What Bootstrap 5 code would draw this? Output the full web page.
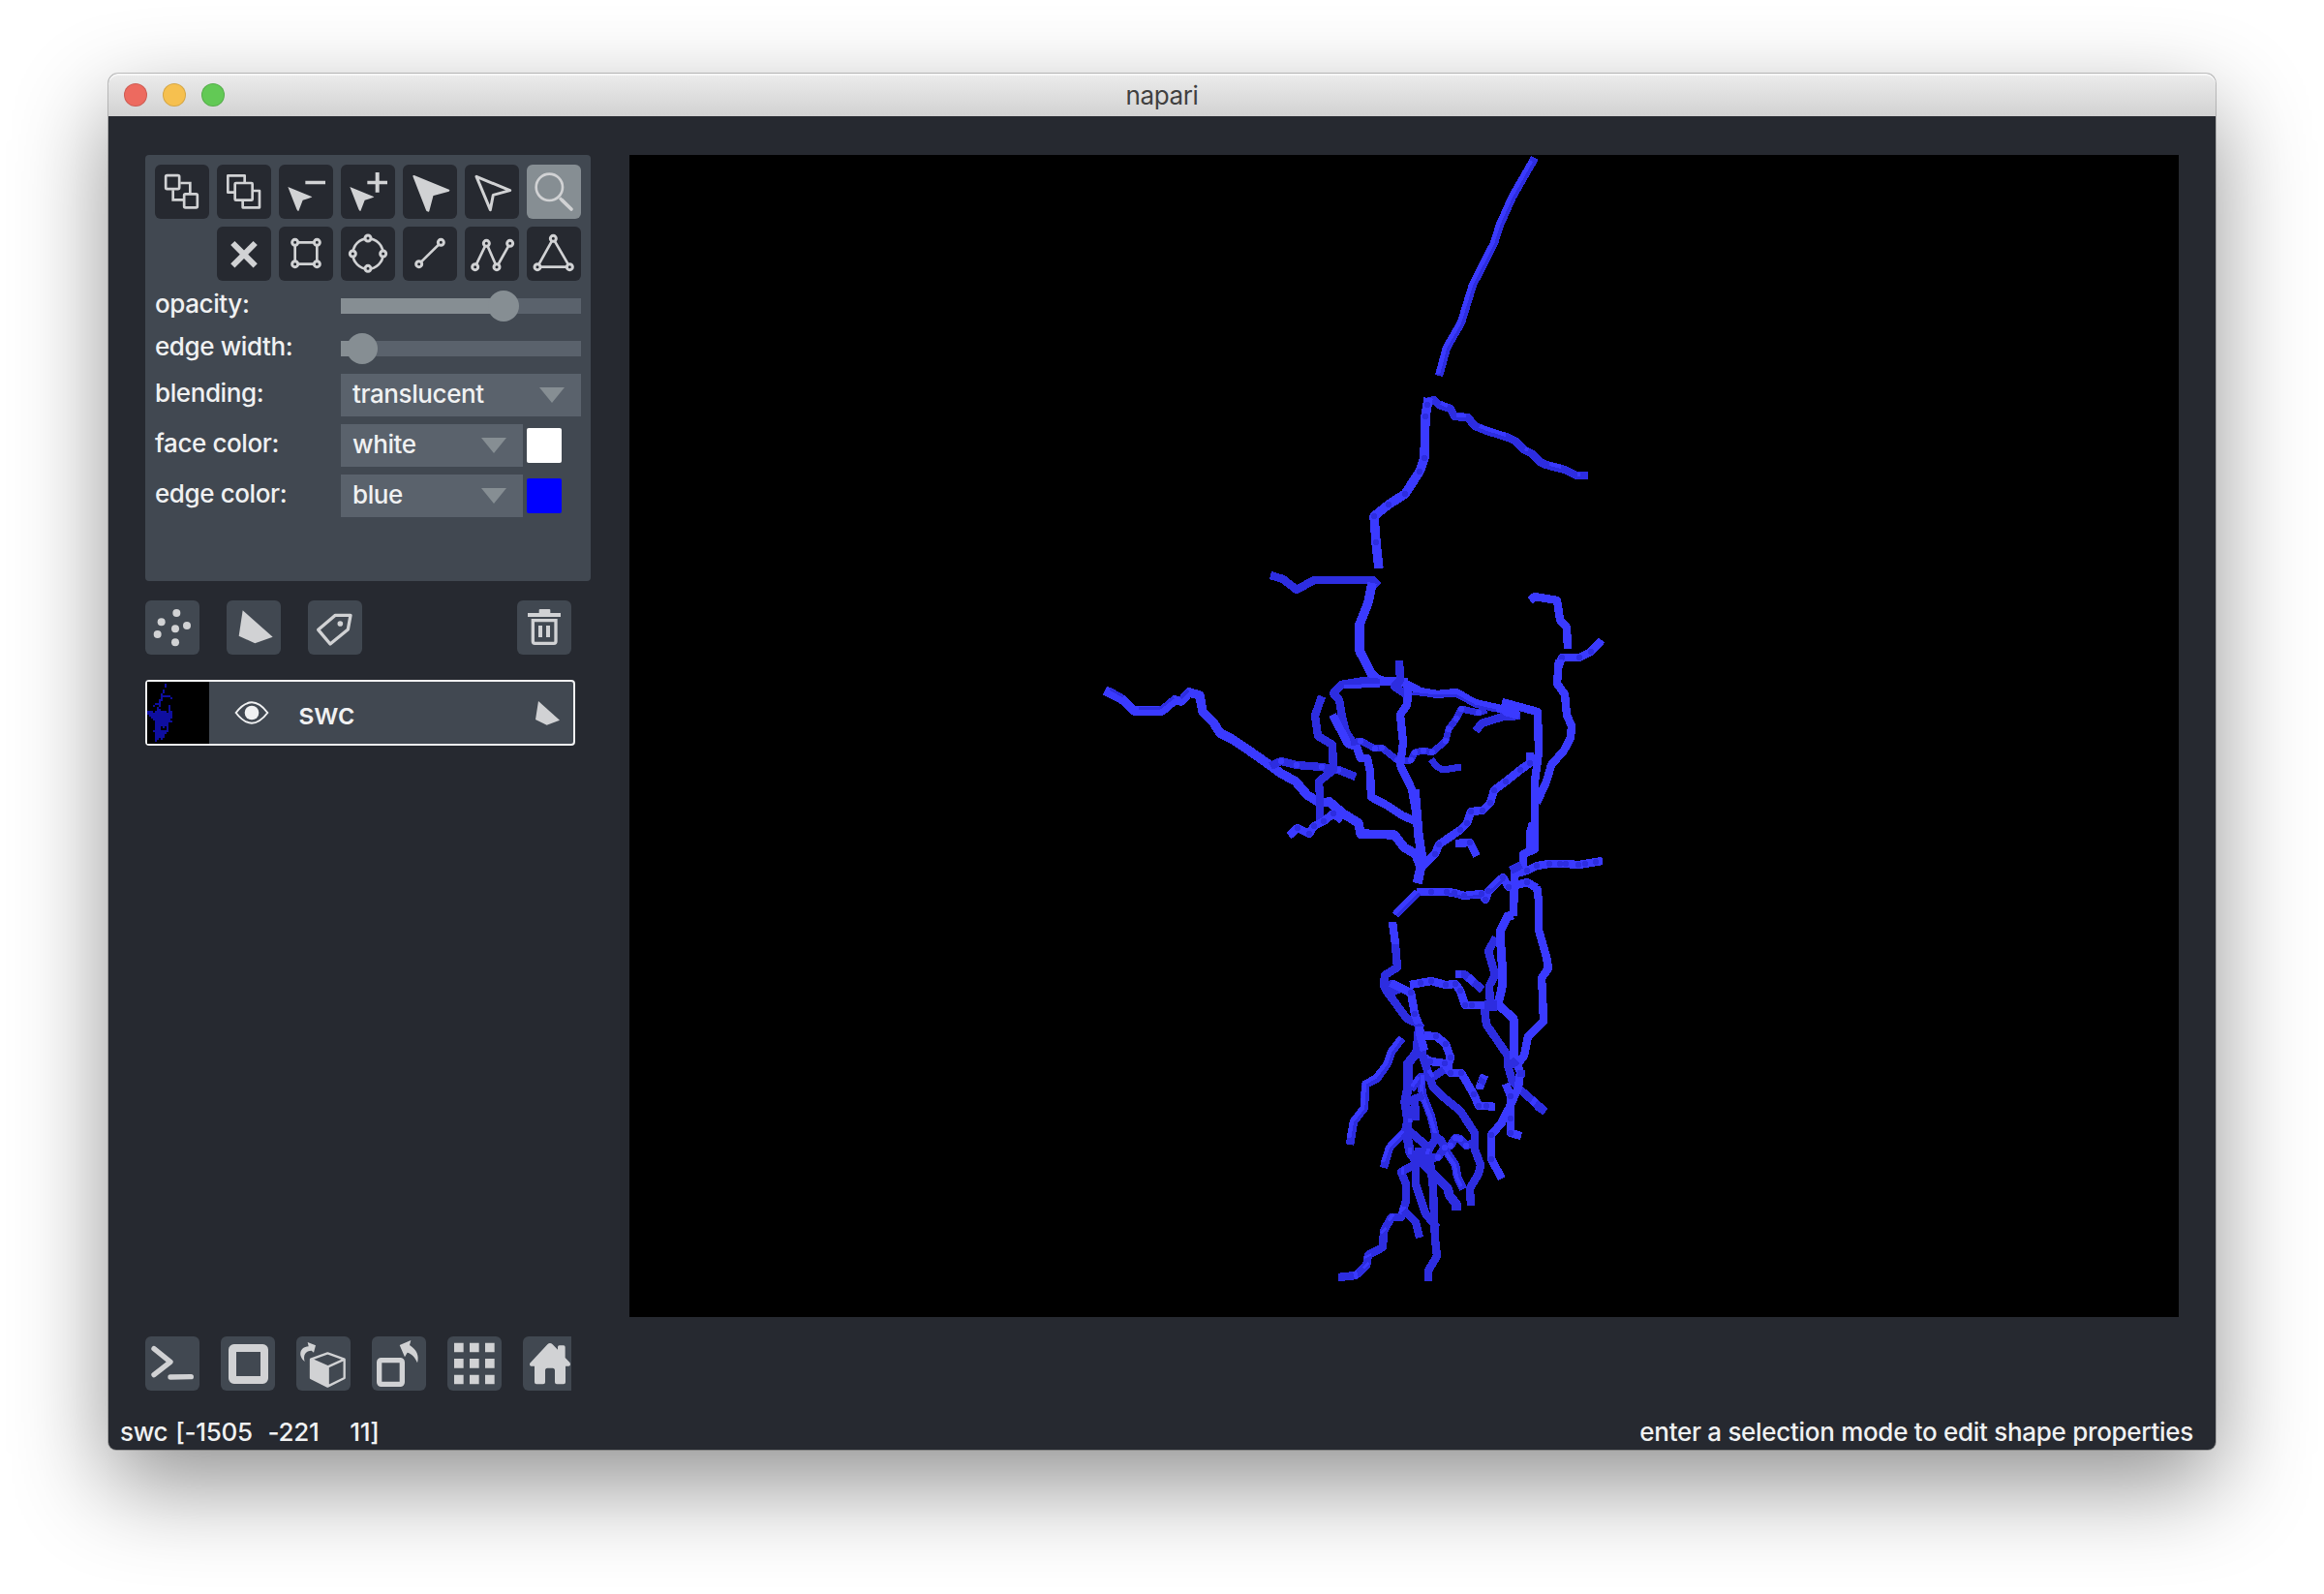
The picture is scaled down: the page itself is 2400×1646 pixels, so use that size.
<!DOCTYPE html>
<html lang="en">
<head>
<meta charset="utf-8">
<title>napari</title>
<link href="https://cdn.jsdelivr.net/npm/bootstrap@5.3.0/dist/css/bootstrap.min.css" rel="stylesheet">
<style>
body{background:#fff;font-family:Inter,"Liberation Sans",sans-serif;font-size:26px;font-weight:500;line-height:32px;color:#f0f1f2;height:1646px;overflow:hidden;padding-top:76px;letter-spacing:-.4px}
.win{width:2176px;height:1421px;background:#262930;border-radius:10px 10px 8px 8px;box-shadow:0 0 0 1px rgba(0,0,0,.22),0 36px 96px rgba(0,0,0,.43)}
.tbar{height:44px;background:linear-gradient(#ececec,#d2d2d2);border-radius:10px 10px 0 0;box-shadow:inset 0 2px 0 #f7f7f7;color:#404040;padding:0 16px}
.caption{font-weight:400;padding-top:2px}
.dot{width:24px;height:24px;border-radius:50%;border:1px solid #0002}
.lights{width:120px;gap:16px}
.main-area{height:1240px;padding:40px 38px 0}
.side{width:460px;margin-right:40px}
.panel{height:440px;background:#414851;border-radius:4px;padding:10px 10px 0}
.tools{display:grid;grid-template-columns:repeat(7,56px);gap:8px}
.tb{width:56px;height:56px;border-radius:6px;background:#262930;border:0;padding:0;display:block;flex:none;overflow:hidden}
.tb.on{background:#868e93}
.tb.lt{background:#414851}
svg{display:block}
.tb svg{width:56px;height:56px}
.ic{fill:#d1d2d4;stroke:none}
.ln{fill:none;stroke:#d1d2d4;stroke-width:8}
.nd circle{fill:#262930;stroke:#d1d2d4;stroke-width:9}
.prop{height:44px;margin-bottom:8px}
.prop.sl{margin:0}
.lab{width:192px;padding-bottom:5px}
.track{width:248px;height:16px;background:#5a626c;position:relative}
.fillbar{height:16px;background:#868e93}
.knob{position:absolute;width:32px;height:32px;border-radius:50%;background:#868e93;top:-8px;margin-left:-16px}
.combo{height:44px;background:#5a626c;padding:0 17px 3px 12px}
.combo.s{width:188px}.combo.l{width:248px}
.tri{border:13px solid transparent;border-top:16px solid #868e93;border-bottom:0;margin-top:3px}
.swatch{width:36px;height:36px;border-radius:2px;margin-left:4px}
.lbtns{padding:20px 0 26px;width:440px;gap:28px}
.layer{width:444px;height:68px;border:2px solid #f0f1f2;border-radius:4px;background:#414851}
.lname{font-size:31px;font-weight:500;letter-spacing:-.6px;margin-left:30px;padding-top:1px}
.canvas{width:1600px;height:1200px;background:#000}
.vbtns{height:76px;padding:20px 0 0 38px;gap:22px}
.vbtns .clip{width:50px;overflow:hidden}
.status{height:61px;padding:27px 23px 0 12px;letter-spacing:-.3px}
.pre{white-space:pre;word-spacing:1.3px}
.tree path{fill:none;stroke:#2d2de0;stroke-width:8.400;stroke-linecap:butt;stroke-linejoin:round}
.tree .b{stroke:#3a3aff}
.tree .w{stroke-width:9.5}
.tree .m{marker-mid:url(#j)}
.tree .n{marker-mid:url(#k)}
</style>
</head>
<body>
<div class="win mx-auto d-flex flex-column">
  <div class="tbar d-flex align-items-center">
    <div class="lights d-flex"><span class="dot" style="background:#ed6a5f"></span><span class="dot" style="background:#f6c04f"></span><span class="dot" style="background:#62c955"></span></div>
    <div class="caption flex-fill text-center">napari</div>
    <div class="lights"></div>
  </div>
  <div class="main-area d-flex">
    <div class="side">
      <div class="panel">
        <div class="tools">
          <button class="tb"><svg viewBox="0 0 168 168"><g class="ln"><rect x="33.500" y="33.500" width="42" height="42" rx="4"/><path d="M79 57H109V88M56 79V109H88"/><rect x="90.500" y="91" width="41" height="42" rx="4"/></g></svg></button>
          <button class="tb"><svg viewBox="0 0 168 168"><g class="ln" stroke-linejoin="round"><path d="M56 86H34V34H86V57"/><rect x="56" y="57" width="54" height="53" rx="3"/><path d="M110 81H132V133H80V110"/></g></svg></button>
          <button class="tb"><svg viewBox="0 0 168 168"><path class="ic" d="M82 50H144V61H82ZM28 69L103 100Q102 103 74 110L61 144Q57 144 55 138Z"/></svg></button>
          <button class="tb"><svg viewBox="0 0 168 168"><path class="ic" d="M82 50H107V24H119V50H144V61H119V86H107V61H82ZM28 69L103 100Q102 103 74 110L61 144Q57 144 55 138Z"/></svg></button>
          <button class="tb"><svg viewBox="0 0 168 168"><path class="ic" stroke-linejoin="round" style="stroke:#d1d2d4;stroke-width:6" d="M34 36L142 80L92 94L79 143L75 141Z"/></svg></button>
          <button class="tb"><svg viewBox="0 0 168 168"><path class="ln" stroke-linejoin="round" style="stroke-width:9" d="M36 37L140 80L88 94L79 140Z"/></svg></button>
          <button class="tb on"><svg viewBox="0 0 168 168"><circle class="ln" cx="70" cy="70" r="41"/><path class="ln" style="stroke-width:9" d="M102 103L110 111"/><path class="ln" stroke-linecap="round" style="stroke-width:11" d="M109 110L138 138"/></svg></button>
          <span></span>
          <button class="tb"><svg viewBox="0 0 168 168"><path class="ln" style="stroke-width:18" d="M49 51L119 121M119 51L49 121"/></svg></button>
          <button class="tb"><svg viewBox="0 0 168 168"><path class="ln" d="M50 49H118V116H50Z"/><g class="nd"><circle cx="50" cy="49" r="9"/><circle cx="118" cy="49" r="9"/><circle cx="118" cy="116" r="9"/><circle cx="50" cy="116" r="9"/></g></svg></button>
          <button class="tb"><svg viewBox="0 0 168 168"><circle class="ln" cx="84" cy="84" r="47"/><g class="nd"><circle cx="84" cy="36" r="9"/><circle cx="131" cy="84" r="9"/><circle cx="84" cy="130" r="9"/><circle cx="37" cy="84" r="9"/></g></svg></button>
          <button class="tb"><svg viewBox="0 0 168 168"><path class="ln" d="M50 116L118 49"/><g class="nd"><circle cx="50" cy="116" r="9"/><circle cx="118" cy="49" r="9"/></g></svg></button>
          <button class="tb"><svg viewBox="0 0 168 168"><path class="ln" d="M32 125L67 52L99 125L140 52"/><g class="nd"><circle cx="32" cy="125" r="9"/><circle cx="67" cy="52" r="9"/><circle cx="99" cy="125" r="9"/><circle cx="140" cy="52" r="9"/></g></svg></button>
          <button class="tb"><svg viewBox="0 0 168 168"><path class="ln" d="M33 125L82 37L133 125Z"/><g class="nd"><circle cx="33" cy="125" r="9"/><circle cx="82" cy="37" r="9"/><circle cx="133" cy="125" r="9"/></g></svg></button>
        </div>
        <div class="pt-1">
          <div class="prop sl d-flex align-items-center"><div class="lab">opacity:</div><div class="track"><div class="fillbar" style="width:168px"></div><span class="knob" style="left:168px"></span></div></div>
          <div class="prop sl d-flex align-items-center mb-1"><div class="lab">edge width:</div><div class="track"><div class="fillbar" style="width:22px"></div><span class="knob" style="left:22px"></span></div></div>
          <div class="prop d-flex align-items-center"><div class="lab">blending:</div><div class="combo l d-flex align-items-center justify-content-between">translucent<span class="tri"></span></div></div>
          <div class="prop d-flex align-items-center"><div class="lab">face color:</div><div class="combo s d-flex align-items-center justify-content-between">white<span class="tri"></span></div><div class="swatch" style="background:#fff"></div></div>
          <div class="prop d-flex align-items-center"><div class="lab">edge color:</div><div class="combo s d-flex align-items-center justify-content-between">blue<span class="tri"></span></div><div class="swatch" style="background:#00f"></div></div>
        </div>
      </div>
      <div class="lbtns d-flex">
        <button class="tb lt"><svg viewBox="0 0 168 168"><g class="ic"><circle cx="97" cy="39" r="12"/><circle cx="50" cy="67" r="12"/><circle cx="129" cy="78" r="12"/><circle cx="93" cy="88" r="12"/><circle cx="38" cy="105" r="12"/><circle cx="93" cy="130" r="12"/></g></svg></button>
        <button class="tb lt"><svg viewBox="0 0 168 168"><path class="ic" d="M50 31L143 113L88 133L38 110Z"/></svg></button>
        <button class="tb lt"><svg viewBox="0 0 168 168"><path class="ln" stroke-linejoin="round" style="stroke-width:10" d="M85 46H132L124 90L69 135L32 91Z"/><circle class="ic" cx="100" cy="72" r="8.500"/></svg></button>
        <button class="tb lt ms-auto"><svg viewBox="0 0 168 168"><path class="ic" d="M33 39H68V30Q68 27 71 27H100Q103 27 103 30V39H135V51H33ZM66 78H78V114H66ZM90 78H102V114H90Z"/><path class="ln" style="stroke-width:10" d="M49 62H120V127Q120 133 114 133H55Q49 133 49 127Z"/></svg></button>
      </div>
      <div class="layer d-flex align-items-center">
        <svg width="64" height="64" viewBox="0 0 32 32" shape-rendering="crispEdges"><rect width="32" height="32" fill="#000"/><path fill="#0e0ea0" d="M9 1h1v2h-1zM8 4h1v2h-1zM7 6h1v1h4v1h-4v2h-1zM12 8h1v1h-1zM6 9h1v4h-1zM4 11h2v1h-2zM3 12h1v1h-1zM11 12h1v3h-1zM5 13h1v2h-1zM1 15h2v1h1v-1h2v-1h1v1h3v1h1v-1h2v4h-1v1h1v1h-2v5h-1v-3h-1v1h-1v-1h-1v2h3v2h-1v2h-1v1h-1v-1h-1v1h-1v1h-1v-5h-1v-1h1v-5h-1v-1h-1v-1h-1v-1h-1v-1h-1v-1h-1z"/></svg>
        <svg width="36" height="24" viewBox="0 0 108 72" style="margin-left:26px"><path fill="none" stroke="#f0f1f2" stroke-width="6" d="M5 36Q54-28 103 36Q54 100 5 36Z"/><circle cx="54" cy="36" r="22" fill="#f0f1f2"/></svg>
        <div class="lname">swc</div>
        <svg class="ms-auto" width="25" height="25" viewBox="0 0 75 75" style="margin-right:14px"><path class="ic" d="M9 0L75 59L35 74L0 57Z"/></svg>
      </div>
    </div>
    <div class="canvas">
      <svg width="1600" height="1200" viewBox="650 160 1600 1200" shape-rendering="crispEdges">
        <defs>
          <marker id="j" markerUnits="userSpaceOnUse" markerWidth="8" markerHeight="8" refX="4" refY="4"><circle cx="4" cy="4" r="3" fill="#2d2de0"/></marker>
          <marker id="k" markerUnits="userSpaceOnUse" markerWidth="8" markerHeight="8" refX="4" refY="4"><circle cx="4" cy="4" r="3" fill="#3a3aff"/></marker>
        </defs>
        <g class="tree">
          <path d="M1585 163L1562 203 1549 232 1543 251 1521 294 1509 333 1494 359 1486 388"/>
          <path class="b" style="stroke-width:4.500" d="M1581 166L1560 203 1547 232 1541 251 1519 294 1507 333 1492 359 1485 386"/>
          <path d="M1640 491L1628 491 1616 485 1597 480 1590 477 1583 469 1573 464 1566 456 1558 452 1536 445 1523 440 1516 431 1502 430 1498 422 1486 418 1481 413 1474 415"/>
          <path class="b" style="stroke-width:4" d="M1632 490L1629 490M1612 482L1600 479M1578 465L1575 463M1555 449L1536 443 1528 440M1514 429L1504 429M1495 419L1488 416"/>
          <path class="b m w" d="M1475 411L1474 418 1472 430 1471 473 1466 487 1451 510 1434 521 1419 533 1421 560 1424 587"/>
          <path d="M1312 594L1325 598 1339 609 1357 599 1418 599 1424 605"/>
          <path class="b w" d="M1417 602L1413 622 1404 645 1404 672 1417 697 1425 703 1454 705"/>
          <path class="b" style="stroke-width:9.500" d="M1141 713L1160 723 1171 734 1200 734 1213 723 1220 724 1228 715 1239 718 1242 735 1253 746 1260 757 1272 763 1287 773 1307 787 1322 798 1338 807 1350 821 1363 829 1373 828 1387 840 1403 850 1405 861 1440 862 1450 875 1462 882 1467 895"/>
          <path style="stroke-width:3" d="M1146 711L1160 719M1176 731L1198 731 1212 720M1219 721L1227 713"/>
          <path class="n" d="M1312 791L1323 786 1339 790 1365 792 1382 795 1400 802"/>
          <path d="M1365 719L1358 739 1361 760 1376 769 1377 795 1362 807 1363 823 1363 850"/>
          <path class="b m" d="M1331 863L1340 855 1352 861 1357 853 1367 848 1377 840 1386 847"/>
          <path d="M1425 705L1408 703 1385 707 1377 716 1383 723 1386 740 1390 756 1396 765"/>
          <path class="b" style="stroke-width:4" d="M1425 708L1388 709"/>
          <path class="b" d="M1376 738L1392 768 1401 771 1405 783 1412 783 1415 797 1416 823 1433 832 1448 842 1464 849"/>
          <path class="n" style="stroke-width:7" d="M1395 767L1405 765 1420 773 1427 772 1443 785 1457 785 1461 777 1470 775 1479 777 1493 765 1496 753 1504 742 1509 732 1527 736 1535 733"/>
          <path class="b" d="M1448 704L1467 714 1484 717 1504 715 1523 726 1550 732 1568 738"/>
          <path style="stroke-width:3" d="M1457 716L1484 719 1503 718 1523 729 1545 734"/>
          <path d="M1445 682L1446 702 1440 709 1452 717"/>
          <path class="b" d="M1455 706L1453 728 1446 738 1449 767 1446 790 1458 815 1462 837 1465 863 1468 888 1463 912"/>
          <path class="b w" d="M1461 815L1465 863 1469 888 1464 912"/>
          <path d="M1524 755L1530 747 1552 740 1570 739"/>
          <path class="b" d="M1551 725L1588 735 1589 777 1585 807 1585 877 1573 882 1573 895 1564 902 1563 946"/>
          <path class="b" d="M1553 730L1555 735 1569 739"/>
          <path style="stroke-width:7" d="M1478 784L1483 791 1490 795 1509 792"/>
          <path class="b m" d="M1580 777L1580 788 1570 795 1555 807 1543 816 1539 829 1531 837 1519 838 1515 850 1508 857 1486 872 1482 882 1468 895"/>
          <path class="b m" d="M1503 871L1518 870 1525 884"/>
          <path class="b" d="M1580 620L1585 616 1608 620 1611 640 1618 648 1619 670"/>
          <path class="b m" d="M1654 661L1643 673 1631 679 1613 679 1610 687"/>
          <path class="b" d="M1610 681L1608 706 1616 717 1618 738 1623 750 1622 762 1615 775 1602 790 1597 807 1587 829"/>
          <path class="b m" d="M1655 889L1648 890 1637 892 1630 893 1617 892 1611 892 1600 892 1587 894 1577 899 1562 903"/>
          <path d="M1560 899L1571 893"/>
          <path class="b" d="M1583 850L1580 860 1580 878"/>
          <path class="b" d="M1441 945L1464 921"/>
          <path class="b m" d="M1463 921L1478 921 1494 921 1502 922 1512 925 1530 923 1534 929 1537 920 1552 906 1558 916 1577 911 1587 917"/>
          <path style="stroke-width:3" d="M1443 946L1466 923M1496 923L1512 927 1530 925M1540 920L1553 908"/>
          <path class="b" d="M1587 915L1589 930 1589 960 1597 988 1599 1000 1592 1010 1593 1027 1594 1055 1578 1070 1574 1090 1566 1101"/>
          <path d="M1545 968L1537 982 1544 1007 1538 1018 1539 1037 1533 1042 1535 1058 1557 1090 1557 1100 1562 1117 1573 1128 1596 1148"/>
          <path class="b w" style="stroke-width:9" d="M1563 945L1557 946 1549 962 1551 993 1551 1020 1547 1037 1563 1052 1563 1093"/>
          <path class="b" d="M1438 952L1441 975"/><path d="M1441 975L1443 999 1430 1007 1429 1018 1433 1025 1453 1052 1467 1058"/>
          <path d="M1429 1022L1438 1017 1442 1027M1533 1038H1546" style="stroke-width:11"/>
          <path class="b m" d="M1436 1015L1457 1025 1461 1047 1466 1060 1467 1070"/>
          <path class="b m" d="M1456 1017L1467 1015 1478 1013 1493 1017 1503 1016 1508 1023 1513 1038 1520 1038 1533 1038"/>
          <path d="M1503 1006L1512 1006 1531 1022"/><path class="b" d="M1503 1006L1509 1006M1516 1009L1522 1014"/>
          <path d="M1448 1072L1437 1086 1433 1098 1422 1114 1410 1120 1409 1144 1398 1158 1394 1182"/>
          <path class="b" style="stroke-width:4.500" d="M1446 1071L1435 1086 1431 1098 1420 1112 1409 1118 1407 1144 1396 1158 1393 1175"/>
          <path class="w" d="M1466 1058L1463 1087 1454 1098 1454 1123 1451 1138 1454 1157 1452 1167 1456 1190 1465 1202"/>
          <path class="b m" d="M1466 1069L1483 1070 1493 1078 1498 1092 1495 1102"/>
          <path d="M1495 1102L1480 1112 1467 1112 1457 1125"/>
          <path class="m b" d="M1468 1090L1477 1096 1492 1098 1498 1108 1509 1108 1522 1130 1527 1142 1535 1142 1544 1143"/>
          <path d="M1466 1062L1469 1090 1475 1108 1480 1123 1493 1135 1508 1147 1523 1170 1523 1187 1529 1203 1527 1212 1518 1227 1519 1245"/>
          <path class="b" d="M1466 1060L1466 1067 1471 1085"/>
          <path d="M1467 1113L1469 1130 1478 1153 1483 1175 1475 1188 1472 1207"/>
          <path class="b" style="stroke-width:4" d="M1469 1110L1468 1130 1477 1153 1482 1170M1465 1112L1458 1122M1475 1105L1480 1112"/>
          <path d="M1453 1138L1470 1131M1461 1136L1462 1157"/>
          <path d="M1453 1166L1435 1185 1429 1206"/><path class="b" style="stroke-width:4" d="M1449 1168L1433 1185 1428 1200"/>
          <path d="M1452 1165L1473 1183 1472 1203M1465 1185V1198"/>
          <path d="M1466 1200L1447 1210 1452 1223 1452 1240 1447 1257 1437 1257 1429 1271 1428 1288 1413 1296 1411 1307 1400 1317 1382 1319"/>
          <path class="b" d="M1447 1209L1450 1209M1450 1246L1448 1254M1428 1270L1430 1272M1412 1296L1413 1298M1410 1306L1412 1308M1398 1317L1402 1316M1435 1256L1438 1258"/>
          <path d="M1450 1250L1462 1262 1466 1278M1462 1203L1462 1223 1472 1253 1484 1268M1477 1200L1480 1227 1481 1257 1482 1280 1484 1297 1475 1312 1475 1323"/>
          <path class="w" d="M1468 1200L1495 1227 1497 1235 1504 1243 1504 1250"/>
          <path d="M1483 1175L1488 1177 1493 1188 1503 1203 1505 1215 1511 1228"/>
          <path class="b" style="stroke-width:4" d="M1490 1186L1502 1203 1504 1215 1509 1225M1475 1186L1473 1198M1454 1157L1458 1157M1456 1185V1192"/>
          <path class="n" d="M1467 1197L1485 1195 1492 1185 1498 1183 1503 1175 1508 1176 1514 1183 1523 1180"/>
          <path class="b" d="M1533 1110L1531 1115M1529 1118L1528 1125"/><path d="M1532 1114L1529 1119"/>
          <path class="b" d="M1562 1090L1570 1107 1568 1123 1559 1143 1550 1160"/>
          <path class="b m" d="M1552 1158L1540 1172 1540 1197 1551 1217"/>
          <path class="b m" d="M1555 1119L1560 1132 1560 1155 1560 1170 1571 1173"/>
          <path d="M1560 1094L1566 1101M1571 1105V1112M1587 1142L1595 1147"/>
          <path class="b" d="M1582 1136L1586 1139"/>
        </g>
      </svg>
    </div>
  </div>
  <div class="vbtns d-flex">
    <button class="tb lt"><svg viewBox="0 0 168 168"><path class="ln" stroke-linecap="round" stroke-linejoin="round" style="stroke-width:16" d="M27 38L78 79L27 119M78 126L142 125"/></svg></button>
    <button class="tb lt"><svg viewBox="0 0 168 168"><rect class="ln" style="stroke-width:24" x="36" y="36" width="99" height="99" rx="5"/></svg></button>
    <button class="tb lt"><svg viewBox="0 0 168 168"><path class="ln" stroke-linejoin="round" style="stroke-width:7" d="M97 52L149 71V129L97 155L45 129V71ZM45 71L98 94L149 71M98 94V155"/><path class="ic" d="M44 72L98 94V157L44 130ZM26 78C6 62 8 34 38 31L35 18L60 28L54 50L47 44C30 44 20 56 26 78Z"/></svg></button>
    <button class="tb lt"><svg viewBox="0 0 168 168"><rect class="ln" style="stroke-width:16" x="23" y="74" width="71" height="74" rx="6"/><path class="ic" d="M86 27L121 12L117 27C140 42 147 60 141 82C135 66 124 54 110 50L102 64Z"/></svg></button>
    <button class="tb lt"><svg viewBox="0 0 168 168"><path class="ic" d="M21 20h29v29h-29zM69 20h29v29h-29zM117 20h29v29h-29zM21 69h29v29h-29zM69 69h29v29h-29zM117 69h29v29h-29zM21 119h29v29h-29zM69 119h29v29h-29zM117 119h29v29h-29z"/></svg></button>
    <div class="clip"><button class="tb lt"><svg viewBox="0 0 168 168"><path class="ic" d="M21 84L76 25Q84 17 92 25L108 41V33Q108 28 113 28H126Q131 28 131 33V66L146 82Q149 92 142 92H132V142Q132 148 126 148H105Q99 148 99 142V106Q99 98 92 98H76Q69 98 69 106V142Q69 148 63 148H42Q36 148 36 142V92H25Q20 92 21 84Z"/></svg></button></div>
  </div>
  <div class="status d-flex justify-content-between"><span class="pre">swc [-1505  -221    11]</span><span>enter a selection mode to edit shape properties</span></div>
</div>
<script src="https://cdn.jsdelivr.net/npm/bootstrap@5.3.0/dist/js/bootstrap.bundle.min.js"></script>
</body>
</html>
